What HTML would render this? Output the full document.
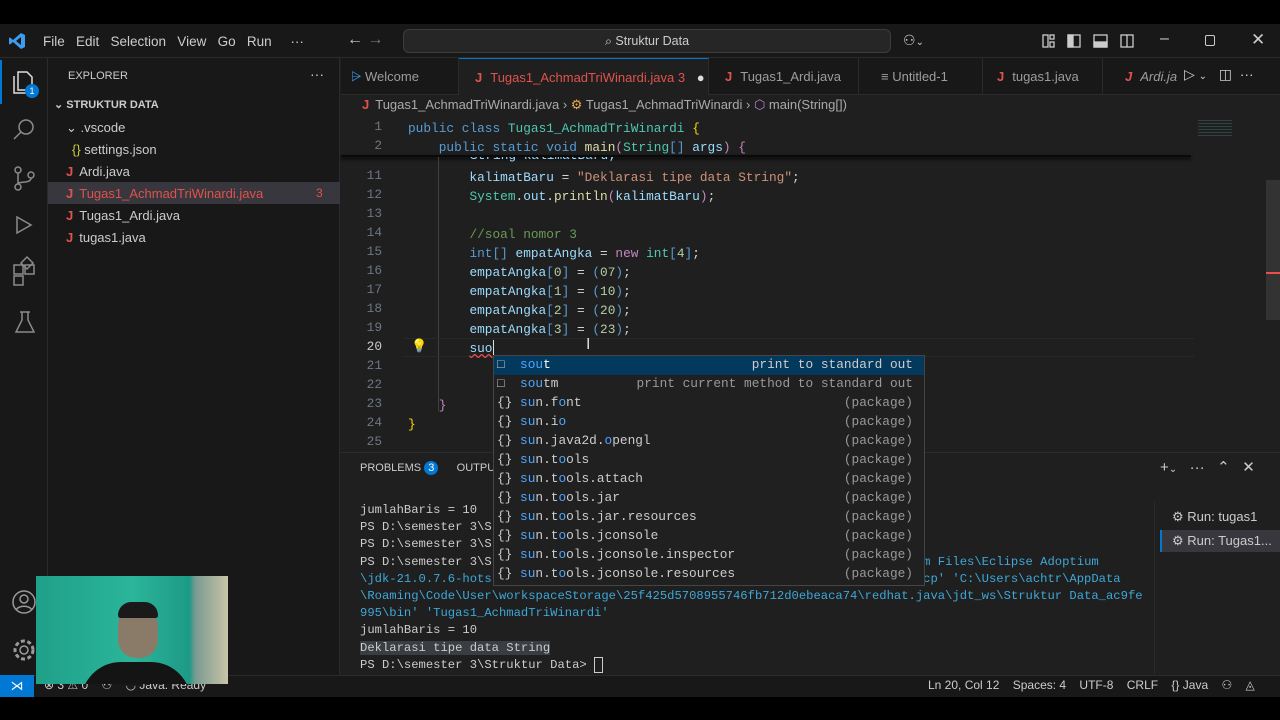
<!DOCTYPE html>
<html><head><meta charset="utf-8"><style>
*{margin:0;padding:0;box-sizing:border-box}
body{width:1280px;height:720px;background:#000;position:relative;overflow:hidden;font-family:"Liberation Sans",sans-serif;color:#ccc;font-size:13px}
.a{position:absolute}
.mono{font-family:"Liberation Mono",monospace;font-size:12.8px;white-space:pre}
.kw{color:#569cd6}.cl{color:#4ec9b0}.v{color:#9cdcfe}.f{color:#dcdcaa}.s{color:#ce9178}.c{color:#6a9955}.n{color:#b5cea8}.p{color:#c586c0}.y{color:#ffd700}.w{color:#d4d4d4}
.ln{position:absolute;left:340px;width:42px;text-align:right;color:#6e7681;font-family:"Liberation Mono",monospace;font-size:12.8px}
.sg{position:absolute;left:497px;width:420px;height:19px;font-family:"Liberation Mono",monospace;font-size:12.8px;white-space:pre;color:#ccc}
.sg b{font-weight:normal;color:#4fa6ff}
.sg i{font-style:normal;position:absolute;right:4px;color:#999}
.tab{position:absolute;top:58px;height:37px;line-height:37px;font-size:13px;color:#9d9d9d;border-right:1px solid #2b2b2b;white-space:nowrap}
.J{color:#e0524d;font-weight:bold;margin-right:8px}
</style></head><body>
<div class="a" style="left:0;top:24px;width:1280px;height:673px;background:#1f1f1f"></div>
<div class="a" style="left:0;top:24px;width:1280px;height:34px;background:#181818;border-bottom:1px solid #2b2b2b"></div>
<svg class="a" style="left:8px;top:32px" width="18" height="18" viewBox="0 0 18 18"><path d="M13 1 L17 3 V15 L13 17 L5 10 L2 12.5 L1 12 V6 L2 5.5 L5 8 Z M13 5 L8 9 L13 13 Z" fill="#3c9cf0"/></svg>
<div class="a" style="left:43px;top:34px;font-size:13.5px;color:#ccc;white-space:nowrap">File&nbsp;&nbsp;&nbsp;Edit&nbsp;&nbsp;&nbsp;Selection&nbsp;&nbsp;&nbsp;View&nbsp;&nbsp;&nbsp;Go&nbsp;&nbsp;&nbsp;Run&nbsp;&nbsp;&nbsp;&nbsp;&nbsp;···</div>
<div class="a" style="left:347px;top:31px;font-size:16px;color:#ccc">← <span style="color:#777">→</span></div>
<div class="a" style="left:403px;top:29px;width:488px;height:24px;border:1px solid #3c3c3c;border-radius:6px;background:#262626;text-align:center;line-height:22px;font-size:12.5px;color:#ccc">⌕ Struktur Data</div>
<div class="a" style="left:903px;top:32px;font-size:14px;color:#ccc">⚇<span style="font-size:10px">⌄</span></div>
<svg class="a" style="left:1040px;top:33px" width="100" height="16" viewBox="0 0 100 16" fill="none" stroke="#ccc" stroke-width="1.3"><rect x="3" y="2" width="5" height="12"/><rect x="10" y="2" width="4" height="4"/><rect x="10" y="9" width="4" height="5"/><rect x="28" y="2" width="12" height="12"/><rect x="28" y="2" width="5" height="12" fill="#ccc"/><rect x="54" y="2" width="13" height="12"/><rect x="54" y="9" width="13" height="5" fill="#ccc"/><rect x="81" y="2" width="12" height="12"/><line x1="87" y1="2" x2="87" y2="14"/></svg>
<div class="a" style="left:1160px;top:30px;font-size:16px;color:#ccc">–</div>
<div class="a" style="left:1205px;top:35px;width:10px;height:11px;border:1.3px solid #ccc;border-radius:2px"></div>
<div class="a" style="left:1251px;top:30px;font-size:17px;color:#ccc">✕</div>
<div class="a" style="left:0;top:58px;width:48px;height:617px;background:#181818;border-right:1px solid #2b2b2b"></div>
<div class="a" style="left:0;top:60px;width:2px;height:44px;background:#0078d4"></div>
<svg class="a" style="left:10px;top:66px" width="30" height="30" viewBox="0 0 30 30" fill="none" stroke="#ddd" stroke-width="1.5"><path d="M8 6h9l5 5v13h-14z"/><path d="M4 10v17h12"/></svg>
<div class="a" style="left:25px;top:84px;width:14px;height:14px;border-radius:7px;background:#0078d4;color:#fff;font-size:9px;text-align:center;line-height:14px">1</div>
<svg class="a" style="left:12px;top:117px" width="26" height="240" viewBox="0 0 26 240" fill="none" stroke="#8b8b8b" stroke-width="1.5"><circle cx="14" cy="10" r="7"/><path d="M9 15 L2 22"/><circle cx="6" cy="53" r="3"/><circle cx="6" cy="70" r="3"/><circle cx="19" cy="58" r="3"/><path d="M6 56v11M19 61c0 6-13 3-13 6"/><path d="M5 100l14 8-14 8z"/><path d="M2 148h9v9h-9zM13 148h9v9h-9zM2 159h9v9h-9zM15 140l6 6-6 6-6-6z"/><path d="M8 195h10M10 195v8l-6 12h18l-6-12v-8"/></svg>
<svg class="a" style="left:10px;top:588px" width="28" height="78" viewBox="0 0 28 78" fill="none" stroke="#9a9a9a" stroke-width="1.5"><circle cx="14" cy="14" r="11"/><circle cx="14" cy="11" r="4"/><path d="M6 22c3-5 13-5 16 0"/><circle cx="14" cy="62" r="4"/><circle cx="14" cy="62" r="9" stroke-dasharray="4 2.5" stroke-width="3"/></svg>
<div class="a" style="left:48px;top:58px;width:292px;height:617px;background:#181818;border-right:1px solid #2b2b2b"></div>
<div class="a" style="left:68px;top:70px;font-size:11px;color:#ccc">EXPLORER</div>
<div class="a" style="left:310px;top:66px;font-size:14px;color:#ccc">···</div>
<div class="a" style="left:54px;top:98px;font-size:11px;color:#ccc;font-weight:bold">⌄ STRUKTUR DATA</div>
<div class="a" style="left:66px;top:120px;font-size:13px;color:#ccc">⌄ .vscode</div>
<div class="a" style="left:72px;top:142px;font-size:13px;color:#ccc"><span style="color:#cbcb41">{}</span> settings.json</div>
<div class="a" style="left:66px;top:164px;font-size:13px;color:#ccc"><span class="J" style="margin-right:6px">J</span>Ardi.java</div>
<div class="a" style="left:48px;top:182px;width:292px;height:22px;background:#37373d"></div>
<div class="a" style="left:66px;top:186px;font-size:13px;color:#e0524d"><span class="J" style="margin-right:6px">J</span>Tugas1_AchmadTriWinardi.java</div>
<div class="a" style="left:316px;top:186px;font-size:12px;color:#e0524d">3</div>
<div class="a" style="left:66px;top:208px;font-size:13px;color:#ccc"><span class="J" style="margin-right:6px">J</span>Tugas1_Ardi.java</div>
<div class="a" style="left:66px;top:230px;font-size:13px;color:#ccc"><span class="J" style="margin-right:6px">J</span>tugas1.java</div>
<div class="a" style="left:341px;top:58px;width:939px;height:37px;background:#181818;border-bottom:1px solid #2b2b2b"></div>
<div class="tab" style="left:341px;width:118px;padding-left:10px"><span style="color:#3c9cf0">⩥</span> Welcome</div>
<div class="tab" style="left:459px;width:250px;padding-left:16px;background:#1f1f1f;border-top:1px solid #0078d4;color:#e0524d"><span class="J">J</span>Tugas1_AchmadTriWinardi.java 3 <span style="color:#ddd;margin-left:8px">●</span></div>
<div class="tab" style="left:709px;width:150px;padding-left:16px"><span class="J">J</span>Tugas1_Ardi.java</div>
<div class="tab" style="left:859px;width:124px;padding-left:22px">≡ Untitled-1</div>
<div class="tab" style="left:983px;width:120px;padding-left:14px"><span class="J">J</span>tugas1.java</div>
<div class="tab" style="left:1103px;width:80px;padding-left:22px;font-style:italic;border:none"><span class="J">J</span>Ardi.ja</div>
<div class="a" style="left:1184px;top:66px;font-size:14px;color:#ccc;white-space:nowrap">▷ <span style="font-size:10px">⌄</span>&nbsp;&nbsp; ◫ &nbsp;···</div>
<div class="a" style="left:362px;top:97px;font-size:13px;color:#aaa;white-space:nowrap"><span class="J" style="margin-right:6px">J</span>Tugas1_AchmadTriWinardi.java › <span style="color:#e8ab53">⚙</span> Tugas1_AchmadTriWinardi › <span style="color:#b180d7">⬡</span> main(String[])</div>
<div class="ln" style="top:119px">1</div><div class="ln" style="top:138px">2</div>
<div class="mono a" style="left:408px;top:119px;line-height:19px"><span class="kw">public</span> <span class="kw">class</span> <span class="cl">Tugas1_AchmadTriWinardi</span> <span class="y">{</span>
    <span class="kw">public</span> <span class="kw">static</span> <span class="kw">void</span> <span class="f">main</span><span class="p">(</span><span class="cl">String</span><span class="kw">[]</span> <span class="v">args</span><span class="p">)</span> <span class="p">{</span></div>
<div class="a" style="left:341px;top:155px;width:850px;height:2px;background:#0a0a0a;box-shadow:0 2px 3px #000"></div>
<div class="a" style="left:341px;top:157px;width:850px;height:8px;overflow:hidden"><div class="mono" style="position:absolute;left:129px;top:-9px;color:#9cdcfe">String kalimatBaru;</div></div>
<div class="a" style="left:438px;top:157px;width:1px;height:254px;background:#404040"></div>
<div class="ln" style="top:168px">11</div><div class="ln" style="top:187px">12</div><div class="ln" style="top:206px">13</div><div class="ln" style="top:225px">14</div><div class="ln" style="top:244px">15</div><div class="ln" style="top:263px">16</div><div class="ln" style="top:282px">17</div><div class="ln" style="top:301px">18</div><div class="ln" style="top:320px">19</div><div class="ln" style="top:339px;color:#ccc">20</div><div class="ln" style="top:358px">21</div><div class="ln" style="top:377px">22</div><div class="ln" style="top:396px">23</div><div class="ln" style="top:415px">24</div><div class="ln" style="top:434px">25</div>
<div class="a" style="left:404px;top:338px;width:790px;height:19px;border-top:1px solid #282828;border-bottom:1px solid #282828"></div>
<div class="mono a" style="left:408px;top:168px;line-height:19px"><span class="v">        kalimatBaru</span> <span class="w">=</span> <span class="s">"Deklarasi tipe data String"</span><span class="w">;</span>
        <span class="cl">System</span><span class="w">.</span><span class="v">out</span><span class="w">.</span><span class="f">println</span><span class="p">(</span><span class="v">kalimatBaru</span><span class="p">)</span><span class="w">;</span>

        <span class="c">//soal nomor 3</span>
        <span class="kw">int[]</span> <span class="v">empatAngka</span> <span class="w">=</span> <span class="p">new</span> <span class="cl">int</span><span class="kw">[</span><span class="n">4</span><span class="kw">]</span><span class="w">;</span>
        <span class="v">empatAngka</span><span class="kw">[</span><span class="n">0</span><span class="kw">]</span> <span class="w">=</span> <span class="kw">(</span><span class="n">07</span><span class="kw">)</span><span class="w">;</span>
        <span class="v">empatAngka</span><span class="kw">[</span><span class="n">1</span><span class="kw">]</span> <span class="w">=</span> <span class="kw">(</span><span class="n">10</span><span class="kw">)</span><span class="w">;</span>
        <span class="v">empatAngka</span><span class="kw">[</span><span class="n">2</span><span class="kw">]</span> <span class="w">=</span> <span class="kw">(</span><span class="n">20</span><span class="kw">)</span><span class="w">;</span>
        <span class="v">empatAngka</span><span class="kw">[</span><span class="n">3</span><span class="kw">]</span> <span class="w">=</span> <span class="kw">(</span><span class="n">23</span><span class="kw">)</span><span class="w">;</span>
        <span class="v" style="text-decoration:underline wavy #f14c4c">suo</span>


    <span class="p">}</span>
<span class="y">}</span></div>
<div class="a" style="left:493px;top:340px;width:1px;height:15px;background:#ddd"></div>
<div class="a" style="left:411px;top:338px;color:#ffcc00;font-size:13px">💡</div>
<div class="a" style="left:586px;top:336px;color:#ddd;font-size:16px">I</div>
<div class="a" style="left:1198px;top:118px;width:34px;height:20px;background:repeating-linear-gradient(#1f1f1f 0 2px,#3a5a5a 2px 3px);opacity:.6"></div>
<div class="a" style="left:1266px;top:180px;width:14px;height:140px;background:#333"></div>
<div class="a" style="left:1266px;top:272px;width:14px;height:2px;background:#f14c4c"></div>
<div class="a" style="left:341px;top:452px;width:939px;height:1px;background:#2b2b2b"></div>
<div class="a" style="left:360px;top:462px;font-size:11px;color:#ccc;white-space:nowrap">PROBLEMS <span style="background:#0078d4;color:#fff;border-radius:8px;padding:1px 4px">3</span>&nbsp;&nbsp;&nbsp;&nbsp;&nbsp;&nbsp;OUTPUT</div>
<div class="a" style="left:1160px;top:458px;font-size:15px;color:#ccc;white-space:nowrap">+<span style="font-size:10px">⌄</span>&nbsp;&nbsp; ··· &nbsp;&nbsp;⌃ &nbsp;&nbsp;✕</div>
<div class="a" style="left:1154px;top:502px;width:1px;height:172px;background:#2b2b2b"></div>
<div class="a" style="left:1160px;top:507px;width:120px;height:22px;padding-left:12px;line-height:20px;font-size:13px;color:#ccc;white-space:nowrap">⚙ Run: tugas1</div>
<div class="a" style="left:1160px;top:530px;width:120px;height:22px;background:#37373d;border-left:2px solid #0078d4;padding-left:10px;line-height:22px;font-size:13px;color:#ccc;white-space:nowrap">⚙ Run: Tugas1...</div>
<div class="mono a" style="left:360px;top:502px;line-height:17.2px;color:#ccc;font-size:12.2px">jumlahBaris = 10
PS D:\semester 3\S
PS D:\semester 3\S
PS D:\semester 3\S                                                     <span style="color:#3ea8d8">Program Files\Eclipse Adoptium</span>
<span style="color:#3ea8d8">\jdk-21.0.7.6-hots                                                         '-cp' 'C:\Users\achtr\AppData</span>
<span style="color:#3ea8d8">\Roaming\Code\User\workspaceStorage\25f425d5708955746fb712d0ebeaca74\redhat.java\jdt_ws\Struktur Data_ac9fe</span>
<span style="color:#3ea8d8">995\bin' 'Tugas1_AchmadTriWinardi'</span>
jumlahBaris = 10
<span style="background:#3a3d41">Deklarasi tipe data String</span>
PS D:\semester 3\Struktur Data> <span style="border:1px solid #ccc">&nbsp;</span></div>
<div class="a" style="left:493px;top:355px;width:432px;height:231px;background:#202020;border:1px solid #454545"></div>
<div class="a" style="left:494px;top:356px;width:430px;height:19px;background:#04395e"></div>
<div class="sg" style="top:357px"><span style="color:#ccc">□</span>  <b>sou</b><span style="color:#fff">t</span><i style="color:#ccc">print to standard out</i></div>
<div class="sg" style="top:376px"><span>□</span>  <b>sou</b>tm<i>print current method to standard out</i></div>
<div class="sg" style="top:395px">{} <b>su</b>n.f<b>o</b>nt<i>(package)</i></div>
<div class="sg" style="top:414px">{} <b>su</b>n.i<b>o</b><i>(package)</i></div>
<div class="sg" style="top:433px">{} <b>su</b>n.java2d.<b>o</b>pengl<i>(package)</i></div>
<div class="sg" style="top:452px">{} <b>su</b>n.t<b>o</b>ols<i>(package)</i></div>
<div class="sg" style="top:471px">{} <b>su</b>n.t<b>o</b>ols.attach<i>(package)</i></div>
<div class="sg" style="top:490px">{} <b>su</b>n.t<b>o</b>ols.jar<i>(package)</i></div>
<div class="sg" style="top:509px">{} <b>su</b>n.t<b>o</b>ols.jar.resources<i>(package)</i></div>
<div class="sg" style="top:528px">{} <b>su</b>n.t<b>o</b>ols.jconsole<i>(package)</i></div>
<div class="sg" style="top:547px">{} <b>su</b>n.t<b>o</b>ols.jconsole.inspector<i>(package)</i></div>
<div class="sg" style="top:566px">{} <b>su</b>n.t<b>o</b>ols.jconsole.resources<i>(package)</i></div>
<div class="a" style="left:0;top:675px;width:1280px;height:22px;background:#181818;border-top:1px solid #2b2b2b"></div>
<div class="a" style="left:0;top:675px;width:34px;height:22px;background:#0078d4;color:#fff;text-align:center;line-height:22px;font-size:13px">⋊</div>
<div class="a" style="left:44px;top:678px;font-size:12px;color:#ccc;white-space:nowrap">⊗ 3 ⚠ 0 &nbsp;&nbsp;&nbsp;⚇ &nbsp;&nbsp;&nbsp;◡ Java: Ready</div>
<div class="a" style="left:928px;top:678px;font-size:12px;color:#ccc;white-space:nowrap">Ln 20, Col 12&nbsp;&nbsp;&nbsp;&nbsp;Spaces: 4&nbsp;&nbsp;&nbsp;&nbsp;UTF-8&nbsp;&nbsp;&nbsp;&nbsp;CRLF&nbsp;&nbsp;&nbsp;&nbsp;{} Java&nbsp;&nbsp;&nbsp;&nbsp;⚇&nbsp;&nbsp;&nbsp;&nbsp;◬</div>
<div class="a" style="left:36px;top:576px;width:192px;height:108px;background:linear-gradient(90deg,#1fa088 0%,#2bb59a 50%,#1d9a86 80%,#7a9a90 83%,#c8c4a8 100%);overflow:hidden">
<div class="a" style="left:82px;top:30px;width:40px;height:52px;border-radius:20px 20px 18px 18px;background:#8a7a68"></div>
<div class="a" style="left:82px;top:26px;width:40px;height:16px;border-radius:20px 20px 4px 4px;background:#1a1a1a"></div>
<div class="a" style="left:45px;top:86px;width:110px;height:40px;border-radius:40px 40px 0 0;background:#141414"></div>
</div>
</body></html>
